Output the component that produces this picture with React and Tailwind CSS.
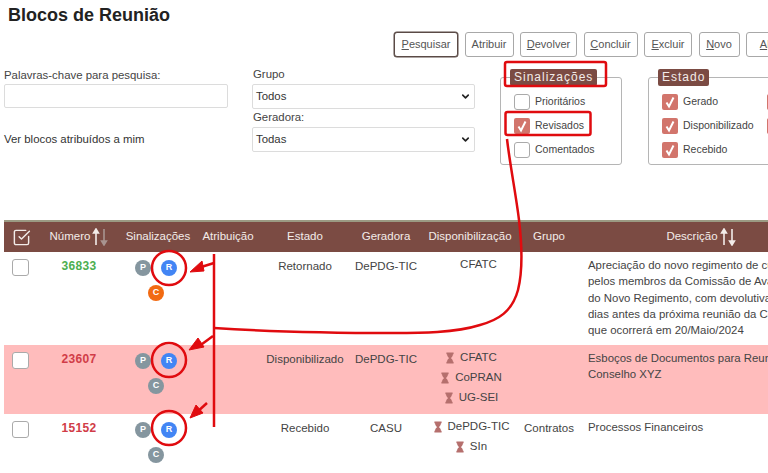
import { ChevronDown, SquareCheckBig } from "lucide-react";

const buttons = [
  { label: "Pesquisar", key: "P", width: "w-[64px]", active: true },
  { label: "Atribuir", width: "w-[49px]" },
  { label: "Devolver", key: "D", width: "w-[57px]" },
  { label: "Concluir", key: "C", width: "w-[54px]" },
  { label: "Excluir", key: "E", width: "w-[48px]" },
  { label: "Novo", key: "N", width: "w-[41px]" },
  { label: "Alterar", key: "A", width: "w-[60px]" },
];

const rows = [
  {
    numero: "36833",
    numeroColor: "text-[#4caf50]",
    lastBadge: "bg-[#f26a12]",
    estado: "Retornado",
    geradora: "DePDG-TIC",
    disp: [{ name: "CFATC", pending: false }],
    grupo: "",
    descricao: [
      "Apreciação do novo regimento de curso",
      "pelos membros da Comissão de Avaliação",
      "do Novo Regimento, com devolutiva",
      "dias antes da próxima reunião da Comissão",
      "que ocorrerá em 20/Maio/2024",
    ],
    height: "h-[93px]",
    bg: "bg-white",
  },
  {
    numero: "23607",
    numeroColor: "text-[#d13c48]",
    lastBadge: "bg-[#85969f]",
    estado: "Disponibilizado",
    geradora: "DePDG-TIC",
    disp: [
      { name: "CFATC", pending: true },
      { name: "CoPRAN", pending: true },
      { name: "UG-SEI", pending: true },
    ],
    grupo: "",
    descricao: ["Esboços de Documentos para Reunião do", "Conselho XYZ"],
    height: "h-[69px]",
    bg: "bg-[#ffbcbc]",
  },
  {
    numero: "15152",
    numeroColor: "text-[#d13c48]",
    lastBadge: "bg-[#85969f]",
    estado: "Recebido",
    geradora: "CASU",
    disp: [
      { name: "DePDG-TIC", pending: true },
      { name: "SIn", pending: true },
    ],
    grupo: "Contratos",
    descricao: ["Processos Financeiros"],
    height: "h-[69px]",
    bg: "bg-white",
  },
];

function Hourglass({ hidden }) {
  return (
    <svg viewBox="0 0 10 14" className={`h-[12px] w-[8px] shrink-0 text-[#b56f6d] ${hidden ? "invisible" : ""}`} fill="currentColor">
      <path d="M0.5 0h9v2.2H8.7C8.6 4.6 7.4 6 6 7c1.4 1 2.6 2.4 2.7 4.8h.8V14h-9v-2.2h.8C1.4 9.4 2.6 8 4 7 2.6 6 1.4 4.6 1.3 2.2H.5z" />
    </svg>
  );
}

function SortArrows({ dim }) {
  return (
    <svg viewBox="0 0 16 18" className="h-[18px] w-[16px] shrink-0" fill="none" strokeWidth="1.6">
      <path d="M4 17V2M1.6 5 4 1l2.4 4z" stroke="#f3ece9" fill="#f3ece9" />
      <path d="M12 1v15M9.6 13l2.4 4 2.4-4z" stroke={dim ? "#a89490" : "#f3ece9"} fill={dim ? "#a89490" : "#f3ece9"} />
    </svg>
  );
}

function Badge({ letter, color }) {
  return (
    <span className={`flex h-4 w-4 items-center justify-center rounded-full text-[9px] font-bold text-white ${color}`}>
      {letter}
    </span>
  );
}

function Check({ checked, row }) {
  if (checked) {
    return (
      <span className="flex h-4 w-4 shrink-0 items-center justify-center rounded-[2px] bg-[#d2756c]">
        <svg viewBox="0 0 16 16" className="h-4 w-4" fill="none" stroke="#fff" strokeWidth="2">
          <path d="M4.500 8.500 7 12.500 11.500 3.500" />
        </svg>
      </span>
    );
  }
  if (row) {
    return <span className="block h-[17px] w-[17px] shrink-0 rounded-[3px] border border-[#aaa] bg-white" />;
  }
  return <span className="block h-4 w-4 shrink-0 rounded-[3px] border border-[#aaa]" />;
}

function CheckLine({ label, checked }) {
  return (
    <div className="flex h-[24px] items-center gap-[5px] text-[10.5px] text-[#444]">
      <Check checked={checked} />
      {label && <span className="whitespace-nowrap">{label}</span>}
    </div>
  );
}

function Group({ title, className, children }) {
  return (
    <div className={`relative h-[88px] shrink-0 rounded-[3px] border border-[#b5b5b5] pl-[13px] pt-[12px] ${className}`}>
      <span className="absolute left-[9px] top-[-9px] rounded-[2px] bg-[#7b4b43] px-[4px] py-[1px] text-[12px] leading-[15px] tracking-[1px] text-[#f3ece9]">
        {title}
      </span>
      {children}
    </div>
  );
}

function FakeSelect({ value }) {
  return (
    <div className="flex h-[25px] items-center justify-between rounded-[2px] border border-[#dcdcdc] bg-white pl-[3px] pr-[3px] text-[11.4px] text-[#333]">
      {value}
      <ChevronDown size={11} strokeWidth={3.5} className="text-[#222]" />
    </div>
  );
}

// anotacoes em vermelho desenhadas por cima da tela
function Annotations() {
  return (
    <svg viewBox="0 0 768 473" className="pointer-events-none absolute left-0 top-0 h-[473px] w-[768px]" fill="none" stroke="#e00b0f" strokeWidth="2.500">
      <rect x="505" y="62" width="101" height="24" rx="2" />
      <rect x="505.500" y="112" width="85" height="23" rx="2" />
      <path d="M507 139C510 165 516 195 519 220 522 245 523 270 518 290 512 312 498 320 480 325 455 333 420 333 393 333 340 333 260 331 214 328" />
      <path d="M214 254V427" />
      <circle cx="169" cy="268" r="17" />
      <circle cx="169" cy="360" r="17" />
      <circle cx="169" cy="428" r="17" />
      <path d="M214 263 198 268" />
      <path d="M190 272 202 261 204 271z" fill="#e00b0f" strokeWidth="1" />
      <path d="M213 336 198 347" />
      <path d="M189 350 198 338 204 347z" fill="#e00b0f" strokeWidth="1" />
      <path d="M207 403 196 413" />
      <path d="M190 418 196 405 203 413z" fill="#e00b0f" strokeWidth="1" />
    </svg>
  );
}

export default function App() {
  return (
    <div className="relative h-[473px] w-[768px] overflow-hidden bg-white font-['Liberation_Sans',Arial,sans-serif] text-[#333]">
      <h1 className="pl-2 pt-[4px] text-[18px] font-bold leading-[22px] text-[#222]">Blocos de Reunião</h1>

      <div className="mt-[6px] flex w-[900px] gap-[6.5px] pl-[394px]">
        {buttons.map((b) => (
          <button
            key={b.label}
            className={`h-[25px] shrink-0 rounded-[3px] border bg-white text-[11px] text-[#555] ${b.width} ${
              b.active ? "border-[#5a4a46] shadow-[0_0_0_0.5px_#5a4a46]" : "border-[#a8a8a8]"
            }`}
          >
            {b.key ? (
              <>
                <u>{b.key}</u>
                {b.label.slice(1)}
              </>
            ) : (
              b.label
            )}
          </button>
        ))}
      </div>

      <div className="mt-[10px] flex h-[130px] pl-[4px]">
        <div className="w-[224px] shrink-0 pt-[1px]">
          <label className="block text-[11.4px] leading-[14px] text-[#444]">Palavras-chave para pesquisa:</label>
          <div className="mt-[2px] h-[24px] rounded-[2px] border border-[#dcdcdc] bg-white" />
          <p className="mt-[24px] text-[11.4px] leading-[14px] text-[#333]">Ver blocos atribuídos a mim</p>
        </div>

        <div className="ml-[24px] w-[223px] shrink-0">
          <label className="block pl-px text-[11.4px] leading-[15px] text-[#444]">Grupo</label>
          <div className="mt-[2px]">
            <FakeSelect value="Todos" />
          </div>
          <label className="mt-[1px] block pl-px text-[11.4px] leading-[15px] text-[#444]">Geradora:</label>
          <div className="mt-[2px]">
            <FakeSelect value="Todas" />
          </div>
        </div>

        <div className="ml-[25px] flex gap-[26px] pt-[10px]">
          <Group title="Sinalizações" className="w-[122px]">
            <CheckLine label="Prioritários" />
            <CheckLine label="Revisados" checked />
            <CheckLine label="Comentados" />
          </Group>
          <Group title="Estado" className="flex w-[200px]">
            <div className="w-[105px] shrink-0">
              <CheckLine label="Gerado" checked />
              <CheckLine label="Disponibilizado" checked />
              <CheckLine label="Recebido" checked />
            </div>
            <div>
              <CheckLine checked />
              <CheckLine checked />
            </div>
          </Group>
        </div>
      </div>

      <table className="ml-[4px] mt-[23px] w-[818px] table-fixed border-collapse text-[11.5px] text-[#444]">
        <colgroup>
          <col className="w-[34px]" />
          <col className="w-[82px]" />
          <col className="w-[76px]" />
          <col className="w-[64px]" />
          <col className="w-[90px]" />
          <col className="w-[72px]" />
          <col className="w-[96px]" />
          <col className="w-[62px]" />
          <col className="w-[242px]" />
        </colgroup>
        <thead>
          <tr className="h-[31px] border-t-2 border-[#9b9a83] bg-[#7b4b43] text-center text-[11.5px] text-[#f3ece9]">
            <th className="font-normal">
              <SquareCheckBig size={19} strokeWidth={1.8} className="mx-auto" />
            </th>
            <th className="font-normal">
              <span className="inline-flex items-center gap-[2px]">
                Número <SortArrows dim />
              </span>
            </th>
            <th className="font-normal">Sinalizações</th>
            <th className="font-normal">Atribuição</th>
            <th className="font-normal">Estado</th>
            <th className="font-normal">Geradora</th>
            <th className="whitespace-nowrap font-normal">Disponibilização</th>
            <th className="font-normal">Grupo</th>
            <th className="font-normal">
              <span className="inline-flex items-center gap-[2px]">
                Descrição <SortArrows />
              </span>
            </th>
          </tr>
        </thead>
        <tbody>
          {rows.map((row) => (
            <tr key={row.numero} className={`${row.height} ${row.bg} align-top`}>
              <td className="pt-[7px]">
                <div className="ml-[8px]">
                  <Check row />
                </div>
              </td>
              <td className={`pt-[7px] text-center text-[12px] font-bold leading-[14px] tracking-[0.3px] ${row.numeroColor}`}>
                {row.numero}
              </td>
              <td className="pr-[4px] pt-[8px]">
                <div className="mx-auto flex w-[42px] flex-wrap justify-center gap-x-[10px] gap-y-[9px]">
                  <Badge letter="P" color="bg-[#85969f]" />
                  <Badge letter="R" color="bg-[#4285f4]" />
                  <Badge letter="C" color={row.lastBadge} />
                </div>
              </td>
              <td />
              <td className="whitespace-nowrap pt-[7px] text-center leading-[14px]">{row.estado}</td>
              <td className="pt-[7px] text-center leading-[14px]">{row.geradora}</td>
              <td className="pl-[3px] pt-[3px] text-center">
                {row.disp.map((d) => (
                  <div key={d.name} className="flex h-[20px] items-center justify-center gap-[6px]">
                    <Hourglass hidden={!d.pending} />
                    {d.name}
                  </div>
                ))}
              </td>
              <td className="pt-[7px] text-center leading-[14px]">{row.grupo}</td>
              <td className="whitespace-nowrap pl-[8px] pt-[5px] text-[11.4px] leading-[16.25px]">
                {row.descricao.map((line) => (
                  <div key={line}>{line}</div>
                ))}
              </td>
            </tr>
          ))}
        </tbody>
      </table>

      <Annotations />
    </div>
  );
}
